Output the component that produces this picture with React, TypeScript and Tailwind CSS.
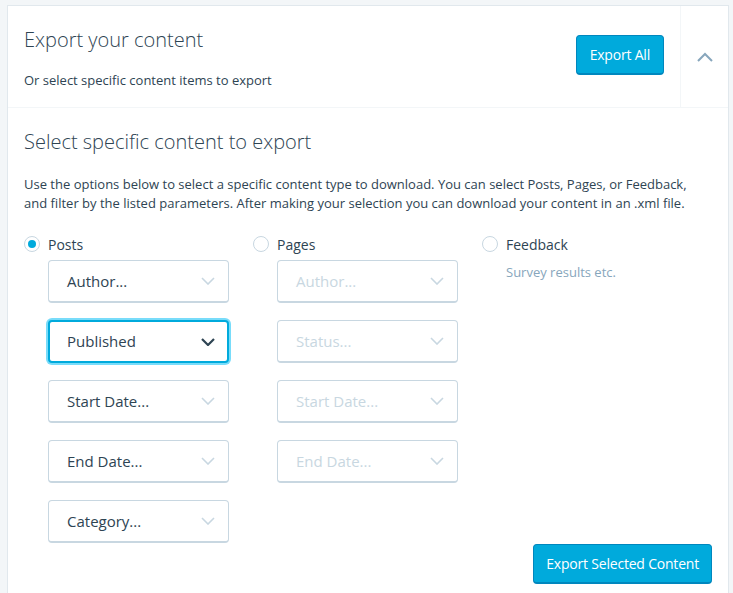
import React from "react";

const font = { fontFamily: '"Open Sans", "Noto Sans", sans-serif' };

function Chevron({ dark }: { dark?: boolean }) {
  return (
    <svg width="14" height="8" viewBox="0 0 14 8" className="shrink-0">
      <path
        d="M1 1 L7 7 L13 1"
        fill="none"
        stroke={dark ? "#2e4453" : "#c8d7e1"}
        strokeWidth={dark ? 2.2 : 1.6}
      />
    </svg>
  );
}

function Select({
  label,
  disabled,
  focused,
}: {
  label: string;
  disabled?: boolean;
  focused?: boolean;
}) {
  if (focused) {
    return (
      <div className="w-[181px] h-[43px] rounded-[4px] border-2 border-[#00aadc] shadow-[0_0_0_2px_#78dcfa] flex items-center justify-between pl-[17px] pr-[12px] bg-white">
        <span className="text-[15px] text-[#2e4453]">{label}</span>
        <Chevron dark />
      </div>
    );
  }
  return (
    <div className="w-[181px] h-[43px] rounded-[4px] border border-b-2 border-[#c8d7e1] flex items-center justify-between pl-[18px] pr-[13px] bg-white">
      <span className={"text-[15px] " + (disabled ? "text-[#c8d7e1]" : "text-[#2e4453]")}>
        {label}
      </span>
      <Chevron />
    </div>
  );
}

function Radio({ checked, label }: { checked?: boolean; label: string }) {
  return (
    <div className="flex items-center h-[20px]">
      <span className="w-[16px] h-[16px] rounded-full border border-[#c8d7e1] flex items-center justify-center bg-white">
        {checked && <span className="w-[8px] h-[8px] rounded-full bg-[#00aadc]" />}
      </span>
      <span className="ml-[8px] text-[14px] text-[#2e4453]">{label}</span>
    </div>
  );
}

export default function App() {
  return (
    <div className="w-[733px] h-[593px] bg-[#f3f6f8] overflow-hidden pt-[5px] pl-[7px]" style={font}>
      <div className="w-[722px] bg-white border border-[#e1e8ed] min-h-[600px]">
        <div className="flex h-[102px] border-b border-[#f3f6f8]">
          <div className="flex-1 flex items-center justify-between pl-[16px] pr-[16px]">
            <div className="flex flex-col mt-[4px]">
              <div className="text-[20px] font-light text-[#2e4453] leading-[28px]">Export your content</div>
              <div className="text-[13px] text-[#2e4453] mt-[17px]">Or select specific content items to export</div>
            </div>
            <button className="h-[40px] px-[13px] rounded-[4px] bg-[#00aadc] border border-[#0087be] border-b-2 text-white text-[14px] tracking-[-0.2px] -mt-[3px]">
              Export All
            </button>
          </div>
          <div className="w-[48px] border-l border-[#f3f6f8] flex items-center justify-center">
            <svg width="16" height="10" viewBox="0 0 16 10">
              <path d="M1 9 L8 2 L15 9" fill="none" stroke="#87a6bc" strokeWidth="2" />
            </svg>
          </div>
        </div>
        <div className="pl-[16px] pr-[16px] pt-[20px]">
          <div className="text-[20px] font-light text-[#2e4453] leading-[28px]">Select specific content to export</div>
          <p className="mt-[19px] text-[13px] leading-[19px] text-[#2e4453]">
            Use the options below to select a specific content type to download. You can select Posts, Pages, or Feedback,
            and filter by the listed parameters. After making your selection you can download your content in an .xml file.
          </p>
          <div className="flex mt-[21px]">
            <div className="w-[229px]">
              <Radio checked label="Posts" />
              <div className="pl-[24px] mt-[6px] flex flex-col gap-[17px]">
                <Select label="Author..." />
                <Select label="Published" focused />
                <Select label="Start Date..." />
                <Select label="End Date..." />
                <Select label="Category..." />
              </div>
            </div>
            <div className="w-[229px]">
              <Radio label="Pages" />
              <div className="pl-[24px] mt-[6px] flex flex-col gap-[17px]">
                <Select label="Author..." disabled />
                <Select label="Status..." disabled />
                <Select label="Start Date..." disabled />
                <Select label="End Date..." disabled />
              </div>
            </div>
            <div>
              <Radio label="Feedback" />
              <div className="pl-[24px] mt-[9px] text-[13px] text-[#87a6bc]">Survey results etc.</div>
            </div>
          </div>
          <div className="flex justify-end mt-[1px]">
            <button className="h-[40px] px-[12px] rounded-[4px] bg-[#00aadc] border border-[#0087be] border-b-2 text-white text-[14px] tracking-[-0.2px]">
              Export Selected Content
            </button>
          </div>
        </div>
      </div>
    </div>
  );
}
